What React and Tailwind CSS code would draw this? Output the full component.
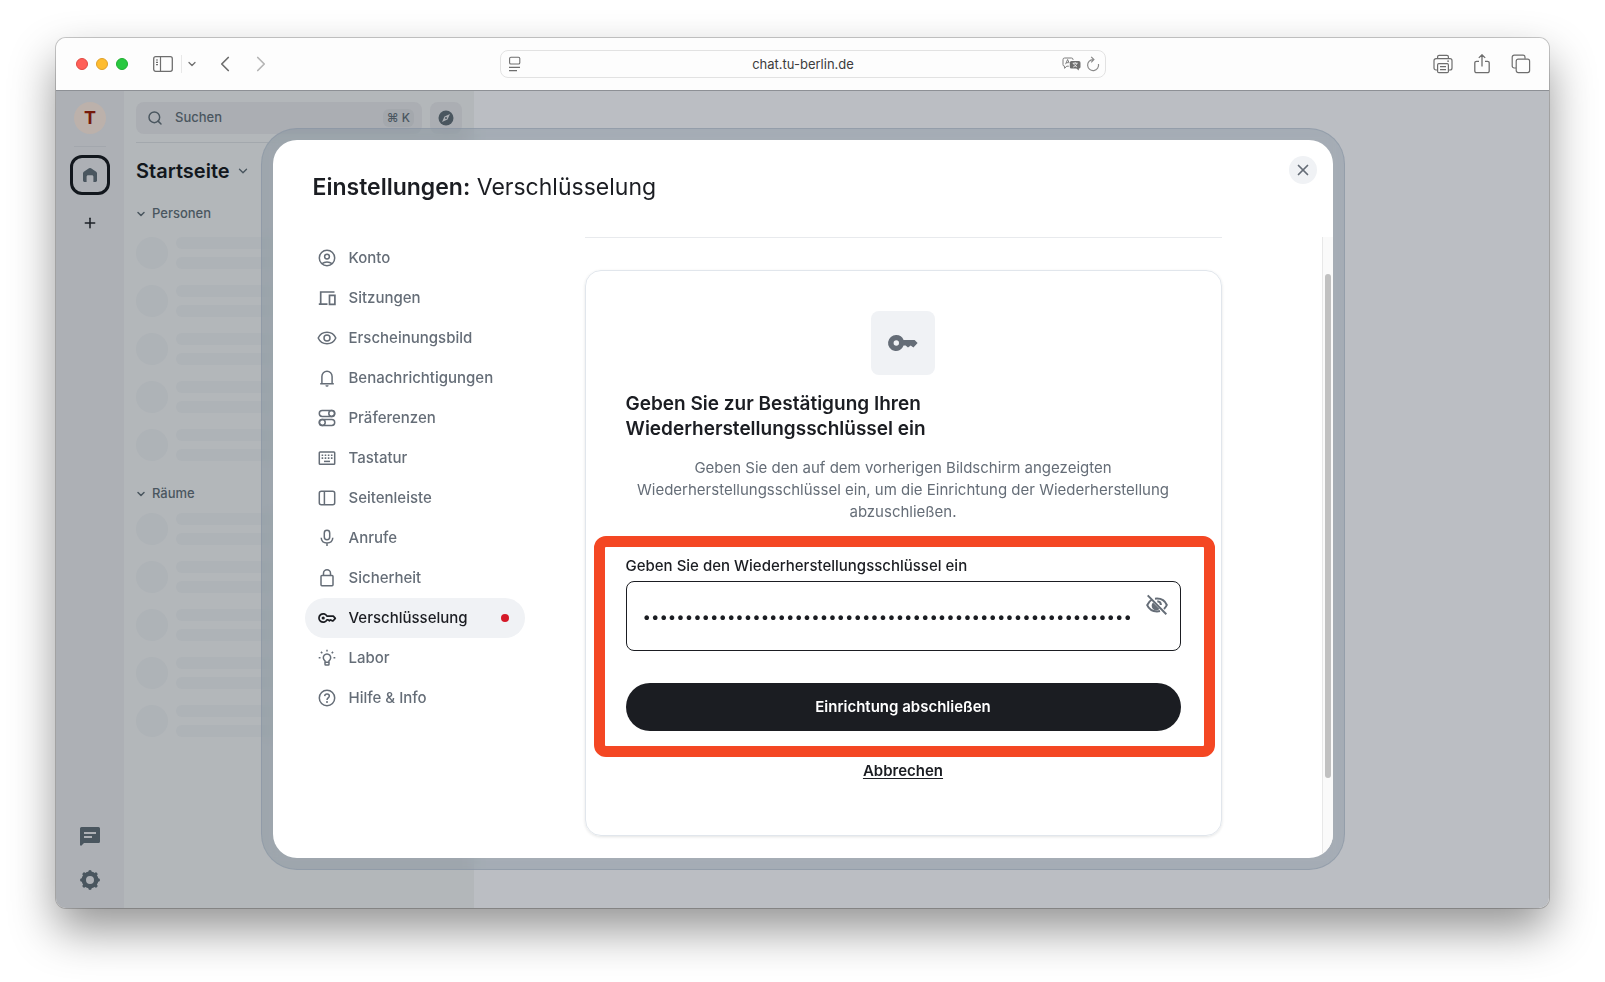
import { useState } from "react";
import { ChevronDown, ChevronLeft, ChevronRight, Plus, Search, X } from "lucide-react";

const DIALOG_KEY = "EsTc 7Kyt mQw4 9fPz Lr2H uN8v bX5d JgA3 oRk6 WeYh Cq1s Zt7";

const Svg = ({ children, className = "size-5", viewBox = "0 0 20 20" }) => (
  <svg viewBox={viewBox} className={className} fill="none" stroke="currentColor" strokeWidth="1.5" aria-hidden="true">
    {children}
  </svg>
);

const UserIcon = () => (
  <Svg>
    <circle cx="10" cy="10" r="7.7" />
    <circle cx="10" cy="8.6" r="2.4" />
    <path d="M5 15.6c1.4-1.1 3.1-1.7 5-1.7s3.6.6 5 1.7" />
  </Svg>
);

const DevicesIcon = () => (
  <Svg>
    <path d="M17.5 4H3.7v12.300M1.800 16.200h8.700" strokeWidth="1.700" />
    <path d="M12.500 7.300h5.400v9h-5.400z" strokeWidth="1.700" />
  </Svg>
);

const EyeIcon = () => (
  <Svg>
    <path d="M1.200 10c1.600-3.600 4.900-5.800 8.800-5.800s7.200 2.200 8.800 5.800c-1.600 3.600-4.900 5.800-8.800 5.800S2.800 13.600 1.200 10z" />
    <circle cx="10" cy="10" r="3" />
  </Svg>
);

const BellIcon = () => (
  <Svg>
    <path d="M3.200 15.700h13.600M4.900 15.700V8.400a5.100 5.100 0 0 1 10.200 0v7.300" />
    <path d="M8.400 17.200a1.600 1.600 0 0 0 3.200 0z" fill="currentColor" stroke="none" />
  </Svg>
);

const TogglesIcon = () => (
  <Svg>
    <rect x="2.300" y="2.600" width="15.400" height="5.800" rx="2.900" />
    <circle cx="14.700" cy="5.500" r="2.900" />
    <rect x="2.300" y="11.600" width="15.400" height="5.800" rx="2.900" />
    <circle cx="5.300" cy="14.500" r="2.900" />
  </Svg>
);

const KeyboardIcon = () => (
  <Svg>
    <rect x="2.300" y="3.900" width="15.400" height="12.300" rx="0.800" />
    <path d="M4.600 7.200h10.900M4.600 10.100h10.900" strokeWidth="1.600" strokeDasharray="1.600 1.500" />
    <path d="M7 13.400h6" />
  </Svg>
);

const SidebarIcon = () => (
  <Svg>
    <rect x="2.300" y="3.200" width="15.400" height="13.600" rx="2" />
    <path d="M7.400 3.200v13.600" />
  </Svg>
);

const MicIcon = () => (
  <Svg>
    <rect x="7.300" y="2.300" width="5.400" height="9.500" rx="2.700" />
    <path d="M4.200 9.800c.2 3.100 2.600 5.200 5.800 5.200s5.600-2.100 5.800-5.200M10 15v3" />
  </Svg>
);

const LockIcon = () => (
  <Svg>
    <rect x="4" y="7.500" width="12" height="10.200" rx="0.900" />
    <path d="M6.500 7.500V5.300a3.500 3.500 0 0 1 7 0v2.200" />
  </Svg>
);

const KeyIcon = () => (
  <Svg>
    <path d="M9.900 8.100a4.200 4.200 0 1 0 0 3.800h1.200l1.300.9 1.300-.9 1.400.9h1.100l2.100-2.400-2-2.300z" strokeLinejoin="round" strokeWidth="1.700" />
    <circle cx="6.200" cy="10" r="1.600" fill="currentColor" stroke="none" />
  </Svg>
);

const BulbIcon = () => (
  <Svg>
    <path d="M8 14.200v-1.400a3.700 3.700 0 1 1 4 0v1.400zM8 14.200v2a.8.8 0 0 0 .8.800h2.400a.8.8 0 0 0 .8-.8v-2" />
    <path d="M10 1.700v1.800M1.700 9.800h1.800M16.500 9.800h1.800M3.900 3.900l1.400 1.400M16.100 3.900l-1.400 1.400" />
  </Svg>
);

const HelpIcon = () => (
  <Svg>
    <circle cx="10" cy="10" r="7.700" />
    <path d="M7.700 8.100c.1-1.200 1-2.100 2.300-2.100s2.300.8 2.300 2c0 1.900-2.300 1.900-2.300 3.900" />
    <circle cx="10" cy="14" r="1" fill="currentColor" stroke="none" />
  </Svg>
);

const tabs = [
  { id: "account", label: "Konto", Icon: UserIcon },
  { id: "sessions", label: "Sitzungen", Icon: DevicesIcon },
  { id: "appearance", label: "Erscheinungsbild", Icon: EyeIcon },
  { id: "notifications", label: "Benachrichtigungen", Icon: BellIcon },
  { id: "preferences", label: "Präferenzen", Icon: TogglesIcon },
  { id: "keyboard", label: "Tastatur", Icon: KeyboardIcon },
  { id: "sidebar", label: "Seitenleiste", Icon: SidebarIcon },
  { id: "calls", label: "Anrufe", Icon: MicIcon },
  { id: "security", label: "Sicherheit", Icon: LockIcon },
  { id: "encryption", label: "Verschlüsselung", Icon: KeyIcon, alert: true },
  { id: "labs", label: "Labor", Icon: BulbIcon },
  { id: "help", label: "Hilfe & Info", Icon: HelpIcon }
];

const BrowserBar = () => (
  <header className="h-[53px] shrink-0 grid grid-cols-[1fr_minmax(0,606px)_1fr] items-center bg-[#fdfdfd] border-b border-[#8d9095] text-[#6e6e6e]">
    <div className="flex items-center pl-5">
      <div className="flex gap-2">
        <span className="size-3 rounded-full bg-[#ff5f57] border border-[#e14942]" />
        <span className="size-3 rounded-full bg-[#febc2e] border border-[#e0a028]" />
        <span className="size-3 rounded-full bg-[#28c840] border border-[#1fae2f]" />
      </div>
      <button aria-label="Seitenleiste" className="ml-[25px]">
        <Svg viewBox="0 0 20 16" className="w-5 h-4">
          <rect x="0.700" y="0.700" width="18.600" height="14.600" rx="2" strokeWidth="1.300" />
          <path d="M7.500 1v14M3 4h2M3 6.300h2M3 8.600h2" strokeWidth="1.200" />
        </Svg>
      </button>
      <span className="w-px h-[18px] bg-[#e8e8e8] ml-2" />
      <button aria-label="Tabgruppen" className="ml-1">
        <ChevronDown size={12} strokeWidth={2.5} />
      </button>
      <button aria-label="Zurück" className="ml-[14px]"><ChevronLeft size={26} strokeWidth={1.6} /></button>
      <button aria-label="Vorwärts" className="ml-[10px] text-[#b5b5b5]"><ChevronRight size={26} strokeWidth={1.6} /></button>
    </div>

    <div className="h-7 flex items-center pl-2 pr-[5px] rounded-lg border border-[#e2e2e2]">
      <Svg viewBox="0 0 12 16" className="w-3 h-4">
        <rect x="0.600" y="1.300" width="10.200" height="6.700" rx="1.300" strokeWidth="1.100" />
        <path d="M0 11.400h11M0 14.600h8" strokeWidth="1.100" />
      </Svg>
      <input aria-label="Adresse" defaultValue="chat.tu-berlin.de"
        className="flex-1 min-w-0 pl-6 pt-px text-center text-[13px] text-[#3c3c3c] outline-none" />
      <Svg viewBox="0 0 20 14" className="w-5 h-4">
        <path d="M11 3V2.500A1.600 1.600 0 0 0 9.400 1H2.600A1.600 1.600 0 0 0 1 2.600v5A1.600 1.600 0 0 0 2.600 9.200v2.100l2.200-2.100h2M3.600 7.200l2-4.700 1.500 3.300M4.400 5.700h2.300" strokeWidth="0.900" />
        <path d="M9.500 4h7.300a1.700 1.700 0 0 1 1.700 1.700v4.200a1.700 1.700 0 0 1-1.700 1.700v2l-2.400-2H9.500a1.700 1.700 0 0 1-1.700-1.700V5.700A1.700 1.700 0 0 1 9.500 4z" fill="currentColor" stroke="none" />
        <path d="M10.700 6.200h5M13.200 5.200v1M14.800 6.300c-.4 1.700-1.700 3-3.600 3.700M11.600 6.300c.5 1.600 1.700 2.900 3.500 3.700" stroke="#fff" strokeWidth="0.800" />
      </Svg>
      <button aria-label="Neu laden" className="ml-1 text-[#8a8a8a]">
        <Svg viewBox="0 0 14 16" className="w-[14px] h-4">
          <path d="M12.500 8A5.500 5.500 0 1 1 7 3.600M5.200.8l2.700 2.800-2.700 2.700" strokeWidth="1.200" />
        </Svg>
      </button>
    </div>

    <div className="flex items-center justify-end gap-[19px] pr-[18px]">
      <button aria-label="Drucken">
        <Svg>
          <path d="M4.600 4.700V2.800A1.500 1.500 0 0 1 6.100 1.300h7.800a1.500 1.500 0 0 1 1.500 1.500v1.900M4.600 16H3a2 2 0 0 1-2-2V6.700a2 2 0 0 1 2-2h14a2 2 0 0 1 2 2V14a2 2 0 0 1-2 2h-1.600" strokeWidth="1.200" />
          <rect x="4.600" y="9.700" width="10.800" height="9" rx="1.200" strokeWidth="1.200" />
          <path d="M7 12.600h6M7 15.600h6M14.200 7.200h1.800" strokeWidth="1.200" />
        </Svg>
      </button>
      <button aria-label="Teilen">
        <Svg>
          <path d="M7 7.300H4.500A1.700 1.700 0 0 0 2.800 9v8a1.700 1.700 0 0 0 1.700 1.700h11a1.700 1.700 0 0 0 1.700-1.700V9a1.700 1.700 0 0 0-1.700-1.700H13M10 12.500V.9M6.800 3.900L10 .8l3.200 3.100" strokeWidth="1.300" />
        </Svg>
      </button>
      <button aria-label="Tabübersicht">
        <Svg>
          <path d="M5 14H3.200a2 2 0 0 1-2-2V3.200a2 2 0 0 1 2-2H12a2 2 0 0 1 2 2v1.500" strokeWidth="1.200" />
          <rect x="5.200" y="5.200" width="13.400" height="13.400" rx="2" strokeWidth="1.200" />
        </Svg>
      </button>
    </div>
  </header>
);

const SpaceRail = () => (
  <nav aria-label="Spaces" className="w-[68px] shrink-0 flex flex-col items-center bg-[#adb0b5] pt-[11px] pb-[18px] text-[#4a565f]">
    <button className="size-8 rounded-full bg-[#bcb1ab] text-lg font-bold text-[#76190a]">T</button>
    <span className="w-8 h-px bg-[#a3a7ad] mt-3" />
    <button aria-label="Startseite" className="size-10 mt-2 grid place-items-center rounded-xl border-3 border-[#12171d]">
      <svg viewBox="0 0 16 16" className="size-4" fill="currentColor" aria-hidden="true">
        <path d="M1 6.400c0-.7.300-1.200.8-1.600L7 1.300a1.700 1.700 0 0 1 2 0l5.200 3.500c.5.400.8.900.8 1.600v7.200c0 .8-.6 1.400-1.400 1.400h-2.200V9.700c0-.9-.6-1.500-1.500-1.500H6.100c-.9 0-1.500.6-1.500 1.500V15H2.400A1.400 1.400 0 0 1 1 13.600z" />
      </svg>
    </button>
    <button aria-label="Space hinzufügen" className="mt-5 text-[#1c2127]"><Plus size={16} strokeWidth={2.3} /></button>
    <button aria-label="Threads" className="mt-auto">
      <svg viewBox="0 0 20 20" className="size-5" fill="currentColor" aria-hidden="true">
        <path fillRule="evenodd" d="M1.500 1h17A1.500 1.500 0 0 1 20 2.500v13a1.500 1.500 0 0 1-1.500 1.500H4l-2.500 2.500C.9 20 0 19.600 0 18.800V2.500A1.500 1.500 0 0 1 1.500 1zM4 6v2h12V6zm0 4v2h8v-2z" />
      </svg>
    </button>
    <button aria-label="Schnelleinstellungen" className="mt-6">
      <svg viewBox="0 0 20 20" className="size-5" aria-hidden="true">
        <circle cx="10" cy="10" r="6.200" fill="none" stroke="currentColor" strokeWidth="4.400" />
        <path d="M10 1.700v2M10 16.300v2M1.700 10h2M16.300 10h2M4.100 4.100l1.400 1.400M14.500 14.500l1.400 1.400M4.100 15.900l1.400-1.400M14.500 5.500l1.400-1.400" stroke="currentColor" strokeWidth="3.400" strokeLinecap="round" />
      </svg>
    </button>
  </nav>
);

const SkeletonRows = () => (
  <ul className="flex flex-col gap-4">
    {[1, 2, 3, 4, 5].map((row) => (
      <li key={row} className="flex gap-2">
        <span className="size-8 rounded-full bg-[#aeb3b7]" />
        <span className="flex-1 flex flex-col gap-2">
          <span className="h-3 rounded-full bg-[#aeb3b7]" />
          <span className="h-3 rounded-full bg-[#aeb3b7]" />
        </span>
      </li>
    ))}
  </ul>
);

const RoomList = () => (
  <aside className="w-[350px] shrink-0 bg-[#b3b7ba] px-3 pt-[11px] text-[#4a565f]">
    <div className="flex gap-2 pb-2 border-b border-[#a3a8ad]">
      <button className="flex-1 h-8 flex items-center gap-3 pl-[11px] pr-2 rounded-lg bg-[#abaeb3] text-[13px] font-medium">
        <Search size={16} strokeWidth={2.2} />
        <span>Suchen</span>
        <kbd className="ml-auto px-1 rounded-md bg-[#a4a8ad] font-[Inter,'DejaVu_Sans',sans-serif] text-xs leading-[18px]">⌘ K</kbd>
      </button>
      <button aria-label="Erkunden" className="size-8 grid place-items-center rounded-lg bg-[#abaeb3]">
        <svg viewBox="0 0 16 16" className="size-4" aria-hidden="true">
          <circle cx="8" cy="8" r="7.500" fill="currentColor" />
          <path d="M12 4L9.500 9.500 4 12l2.500-5.500z" fill="#abaeb3" />
          <circle cx="8" cy="8" r="1" fill="currentColor" />
        </svg>
      </button>
    </div>
    <h2 className="flex items-center gap-1.5 mt-3 h-8 text-xl font-semibold text-[#12171d]">
      Startseite <ChevronDown size={14} strokeWidth={2.3} className="text-[#4a565f]" />
    </h2>
    <h3 className="flex items-center gap-1 mt-[15px] h-6 mb-[11px] text-[13px] font-medium">
      <ChevronDown size={12} strokeWidth={3} className="-ml-px mr-px" /> Personen
    </h3>
    <SkeletonRows />
    <h3 className="flex items-center gap-1 mt-[21px] h-6 mb-[7px] text-[13px] font-medium">
      <ChevronDown size={12} strokeWidth={3} className="-ml-px mr-px" /> Räume
    </h3>
    <SkeletonRows />
  </aside>
);

const RecoveryCard = () => {
  const [recoveryKey, setRecoveryKey] = useState(DIALOG_KEY);
  const [visible, setVisible] = useState(false);

  const handleSubmit = (e) => {
    e.preventDefault();
  };

  return (
    <section className="flex flex-col rounded-2xl border border-[#e1e6ec] px-10 pt-10 pb-[53px] shadow-[0_1px_3px_rgba(27,29,34,0.12)]">
      <div className="size-16 self-center grid place-items-center rounded-lg bg-[#f0f2f5] text-[#656d77]">
        <svg viewBox="0 0 32 32" className="size-8" fill="currentColor" aria-hidden="true">
          <path fillRule="evenodd" d="M9.300 8a8 8 0 0 1 7.300 5h11l3 3-4.200 4.600-2.700-2-2.700 2-2.400-2h-2A8 8 0 1 1 9.300 8zm0 5.300a2.700 2.700 0 1 0 0 5.400 2.700 2.700 0 0 0 0-5.400z" />
        </svg>
      </div>
      <h2 className="mt-4 max-w-[340px] text-[19px] leading-[25px] font-semibold text-[#1b1d22]">
        Geben Sie zur Bestätigung Ihren Wiederherstellungsschlüssel ein
      </h2>
      <p className="mt-4 text-center text-[15px] leading-[22px] text-[#656d77]">
        Geben Sie den auf dem vorherigen Bildschirm angezeigten
        Wiederherstellungsschlüssel ein, um die Einrichtung der Wiederherstellung
        abzuschließen.
      </p>

      <form onSubmit={handleSubmit}
        className="-ml-8 -mr-[34px] mt-[13px] flex flex-col rounded-xl border-[11px] border-[#f44723] pl-[21px] pr-[23px] pt-2 pb-[15px]">
        <label htmlFor="recovery-key" className="text-[15px] leading-[22px] font-medium text-[#1b1d22]">
          Geben Sie den Wiederherstellungsschlüssel ein
        </label>
        <div className="flex items-start mt-1 h-[70px] rounded-lg border border-[#1b1d22] pl-4 pr-[11px]">
          <input id="recovery-key" type={visible ? "text" : "password"} value={recoveryKey}
            onChange={(e) => setRecoveryKey(e.target.value)}
            className="flex-1 min-w-0 h-full text-[15px] text-[#1b1d22] outline-none" />
          <button type="button" aria-label="Schlüssel anzeigen" onClick={() => setVisible(!visible)}
            className="ml-2 mt-[11px] text-[#656d77]">
            <Svg viewBox="0 0 24 24" className="size-6">
              <path d="M7 6.500C4.800 7.800 3.100 9.800 2.200 12.200c1.600 3.700 5.400 6.200 9.800 6.200 1 0 2-.1 3-.4M10 5.800c.6-.1 1.300-.2 2-.2 4.400 0 8.200 2.600 9.800 6.400-.6 1.500-1.600 2.800-2.800 3.900" strokeWidth="2" />
              <path d="M12.300 8.300a3.800 3.800 0 0 1 3.600 3.700" strokeWidth="2" />
              <path d="M8 9.600l6.500 6.500A4.500 4.500 0 0 1 8 9.600z" fill="currentColor" stroke="none" />
              <path d="M2.700 2.400l18.600 18.900" strokeWidth="2" />
            </Svg>
          </button>
        </div>
        <button type="submit" className="mt-8 h-12 rounded-full bg-[#1b1d22] text-[15px] font-semibold text-white">
          Einrichtung abschließen
        </button>
      </form>
      <a href="#abbrechen" className="self-center mt-[3px] text-[15px] leading-[22px] font-semibold text-[#1b1d22] underline underline-offset-2">
        Abbrechen
      </a>
    </section>
  );
};

const SettingsDialog = () => {
  const [active, setActive] = useState("encryption");

  return (
    <div role="dialog" aria-label="Einstellungen"
      className="w-full max-w-[1084px] flex rounded-[36px] border border-[#8894a4]/60 bg-[#0a3050]/12 p-[11px] backdrop-blur-sm">
      <div className="relative flex-1 min-w-0 flex flex-col overflow-hidden rounded-3xl bg-white">
        <h1 className="pl-10 pt-[31px] pb-[34px] text-[23px] leading-8 text-[#1b1d22]">
          <span className="font-semibold">Einstellungen:</span> Verschlüsselung
        </h1>
        <button aria-label="Schließen"
          className="absolute top-4 right-4 size-7 grid place-items-center rounded-full bg-[#f0f2f5] text-[#656d77]">
          <X size={18} strokeWidth={2.3} />
        </button>

        <div className="flex-1 flex min-h-0">
          <nav className="w-[220px] shrink-0 ml-8 pt-px">
            {tabs.map(({ id, label, Icon, alert }) => (
              <button key={id} onClick={() => setActive(id)}
                className={`w-full h-10 flex items-center gap-3 px-3 rounded-full text-[15px] font-medium ${
                  active === id ? "bg-[#f0f2f5] text-[#1b1d22]" : "text-[#656d77]"
                }`}>
                <Icon />
                {label}
                {alert && <span className="ml-auto mr-1 size-2 rounded-full bg-[#d51928]" />}
              </button>
            ))}
          </nav>

          <div className="flex-1 min-w-0 pl-[60px] pr-[100px]">
            <hr className="border-[#e8eaed] mb-8" />
            <RecoveryCard />
          </div>
          <div className="w-[11px] shrink-0 border-l border-[#e8e8e8] bg-[#fafafa] pt-[37px] pl-[2px]">
            <div className="w-1.5 h-[504px] rounded-full bg-[#c1c1c1]" />
          </div>
        </div>
      </div>
    </div>
  );
};

const App = () => {
  return (
    <div className="min-h-screen flex flex-col bg-white px-14 pt-[38px] pb-[74px] font-[Inter,'Liberation_Sans',sans-serif]">
      <div className="flex-1 flex flex-col overflow-hidden rounded-[10px] ring-1 ring-black/20 shadow-[0_22px_46px_rgba(0,0,0,0.42)]">
        <BrowserBar />
        <div className="relative flex-1 flex bg-[#bbbec3]">
          <SpaceRail />
          <RoomList />
          <div className="absolute inset-0 flex justify-center px-6 pt-[37px] pb-[38px]">
            <SettingsDialog />
          </div>
        </div>
      </div>
    </div>
  );
};

export default App;
